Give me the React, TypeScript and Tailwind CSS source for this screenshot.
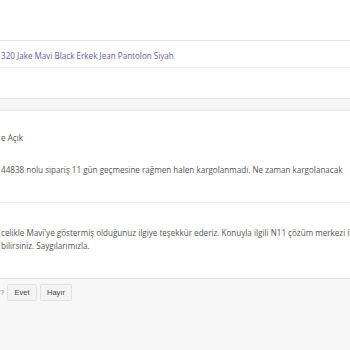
import React from 'react';

const sans = { fontFamily: '"Open Sans", "Noto Sans", sans-serif' };

export default function App() {
    return (
        <div className="w-[350px] h-[350px] overflow-hidden bg-white flex flex-col text-[8.1px] text-[#555]" style={sans}>
            <div className="h-[40px] shrink-0" />

            {/* product row */}
            <div className="h-[28px] shrink-0 border-t border-b border-t-[#e8e8e8] border-b-[#f2f2f2] flex items-center pt-[5px] pl-[1px]">
                <a className="text-[#6a5aa8] whitespace-nowrap">320 Jake Mavi Black Erkek Jean Pantolon Siyah</a>
            </div>

            <div className="h-[30px] shrink-0" />

            {/* section band */}
            <div className="h-[13px] shrink-0 bg-[#f6f6f6] border-t border-b border-[#e6e6e6]" />

            {/* question */}
            <div className="h-[92px] shrink-0 flex flex-col pl-[1px] border-b border-[#ececec]">
                <div className="mt-[20px] h-[13px] leading-[13px] whitespace-nowrap">e Açık</div>
                <div className="mt-[19px] h-[13px] leading-[13px] whitespace-nowrap">44838 nolu sipariş 11 gün geçmesine rağmen halen kargolanmadı. Ne zaman kargolanacak</div>
            </div>

            {/* answer */}
            <div className="h-[75px] shrink-0 flex flex-col pl-[1px] leading-[13px]">
                <div className="mt-[23px] whitespace-nowrap">celikle Mavi'ye göstermiş olduğunuz ilgiye teşekkür ederiz. Konuyla ilgili N11 çözüm merkezi ile</div>
                <div className="whitespace-nowrap">bilirsiniz. Saygılarımızla.</div>
            </div>

            {/* feedback footer */}
            <div className="flex-1 bg-[#f7f7f7] border-t border-[#e6e6e6] pt-[5px] flex items-start gap-[3px] text-[7.5px]" style={{ fontFamily: '"Liberation Sans", Arial, sans-serif' }}>
                <span className="h-[17px] leading-[17px] text-[#888] w-[4px]">?</span>
                <button className="h-[17px] w-[30px] bg-[#f4f4f4] border border-[#e2e2e2] rounded-[2px] text-[#444]">Evet</button>
                <button className="h-[17px] w-[32px] bg-[#f4f4f4] border border-[#e2e2e2] rounded-[2px] text-[#444]">Hayır</button>
            </div>
        </div>
    );
}
